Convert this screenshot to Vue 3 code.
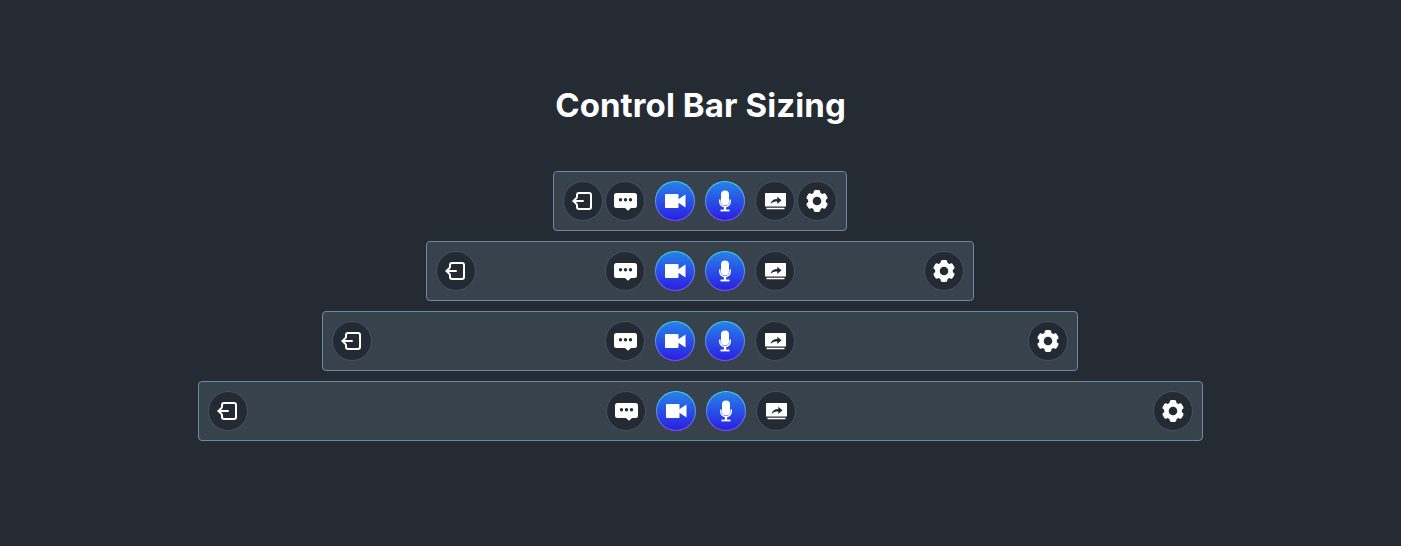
<script setup>
const bars = [
  { id: 'xs', width: 294 },
  { id: 'sm', width: 548 },
  { id: 'md', width: 756 },
  { id: 'lg', width: 1005 },
]
const gearTeeth = [0, 60, 120, 180, 240, 300]
</script>

<template>
  <div class="page">
    <h1 class="title">Control Bar Sizing</h1>
    <div class="stack">
      <div v-for="bar in bars" :key="bar.id" class="bar" :style="{ width: bar.width + 'px' }">
        <button class="btn" aria-label="Leave">
          <svg viewBox="0 0 40 40" width="40" height="40">
            <path d="M14 16v-2a2 2 0 0 1 2-2h10a2 2 0 0 1 2 2v12a2 2 0 0 1-2 2H16a2 2 0 0 1-2-2v-2" fill="none" stroke="#fff" stroke-width="2" stroke-linecap="round" />
            <path d="M10.500 20H20" fill="none" stroke="#fff" stroke-width="2" stroke-linecap="round" />
            <path d="M13.500 17 10.500 20l3 3" fill="none" stroke="#fff" stroke-width="2" stroke-linecap="round" stroke-linejoin="round" />
          </svg>
        </button>

        <div class="center">
          <button class="btn" aria-label="Chat">
            <svg viewBox="0 0 40 40" width="40" height="40">
              <path fill-rule="evenodd" fill="#fff" d="M11.500 12h18a2.500 2.500 0 0 1 2.500 2.500v10a2.500 2.500 0 0 1-2.500 2.500h-3.500l-3 2.800-3-2.800h-8.500a2.500 2.500 0 0 1-2.500-2.500v-10a2.500 2.500 0 0 1 2.500-2.500zM15.500 17a1.700 1.700 0 1 0 0 3.400 1.700 1.700 0 0 0 0-3.400zM20.500 17a1.700 1.700 0 1 0 0 3.400 1.700 1.700 0 0 0 0-3.400zM25.500 17a1.700 1.700 0 1 0 0 3.400 1.700 1.700 0 0 0 0-3.400z" />
            </svg>
          </button>
          <button class="btn blue" aria-label="Camera">
            <svg viewBox="0 0 40 40" width="40" height="40">
              <rect x="10" y="13" width="13.500" height="14" rx="0.800" fill="#fff" />
              <path d="M23 18.500 30.500 13.500v13L23 21.500z" fill="#fff" />
            </svg>
          </button>
          <button class="btn blue" aria-label="Microphone">
            <svg viewBox="0 0 40 40" width="40" height="40">
              <rect x="16" y="9.500" width="8" height="15" rx="4" fill="#fff" />
              <path d="M14.800 18.500v2a5.200 5.200 0 0 0 10.400 0v-2" fill="none" stroke="#fff" stroke-width="1.500" />
              <path d="M20 25v4" stroke="#fff" stroke-width="2.200" />
              <path d="M15.500 29.500h9" stroke="#fff" stroke-width="1.800" />
            </svg>
          </button>
          <button class="btn" aria-label="Share screen">
            <svg viewBox="0 0 40 40" width="40" height="40">
              <rect x="10" y="12" width="21" height="13.500" rx="0.500" fill="#fff" />
              <path d="M11.500 27.500h18" stroke="#fff" stroke-width="1.500" />
              <path d="M15.500 23c.5-3 2.800-5 6.800-5v-2.300l4.200 3.600-4.200 3.600v-2.400c-2.800 0-5 .6-6.800 2.500z" fill="#232a33" />
            </svg>
          </button>
        </div>

        <button class="btn" aria-label="Settings">
          <svg viewBox="0 0 40 40" width="40" height="40">
            <rect v-for="deg in gearTeeth" :key="deg" x="16.700" y="9" width="6.600" height="6" rx="1.800" fill="#fff" :transform="`rotate(${deg} 20 20)`" />
            <circle cx="20" cy="20" r="6.600" fill="none" stroke="#fff" stroke-width="4.600" />
          </svg>
        </button>
      </div>
    </div>
  </div>
</template>

<style>
body {
  background: #252b33;
}
</style>

<style scoped>
.page {
  height: 546px;
  box-sizing: border-box;
  padding-top: 82px;
  background: #252b33;
  font-family: Inter, "Liberation Sans", sans-serif;
}

.title {
  margin: 0 0 43px;
  height: 46px;
  line-height: 46px;
  font-size: 33px;
  font-weight: 700;
  letter-spacing: 0.1px;
  text-align: center;
  color: #fff;
}

.stack {
  display: flex;
  flex-direction: column;
  align-items: center;
  gap: 10px;
  width: 1400px;
}

.bar {
  display: flex;
  align-items: center;
  justify-content: space-between;
  box-sizing: border-box;
  height: 60px;
  padding: 9px;
  background: #38424c;
  border: 1px solid #6f88a3;
  border-radius: 4px;
}

.bar:last-child {
  margin-left: 1px;
}

.center {
  display: flex;
  align-items: center;
  gap: 10px;
}

.btn {
  display: flex;
  flex: none;
  align-items: center;
  justify-content: center;
  box-sizing: border-box;
  width: 40px;
  height: 40px;
  padding: 0;
  background: #232a33;
  border: 1px solid #45535f;
  border-radius: 50%;
  cursor: pointer;
}

.btn svg {
  flex: none;
  display: block;
}

.blue {
  background: linear-gradient(180deg, #2682e8, #2b1fe2) padding-box,
    linear-gradient(180deg, #3fdfee, #7a4be8) border-box;
  border-color: transparent;
}
</style>
